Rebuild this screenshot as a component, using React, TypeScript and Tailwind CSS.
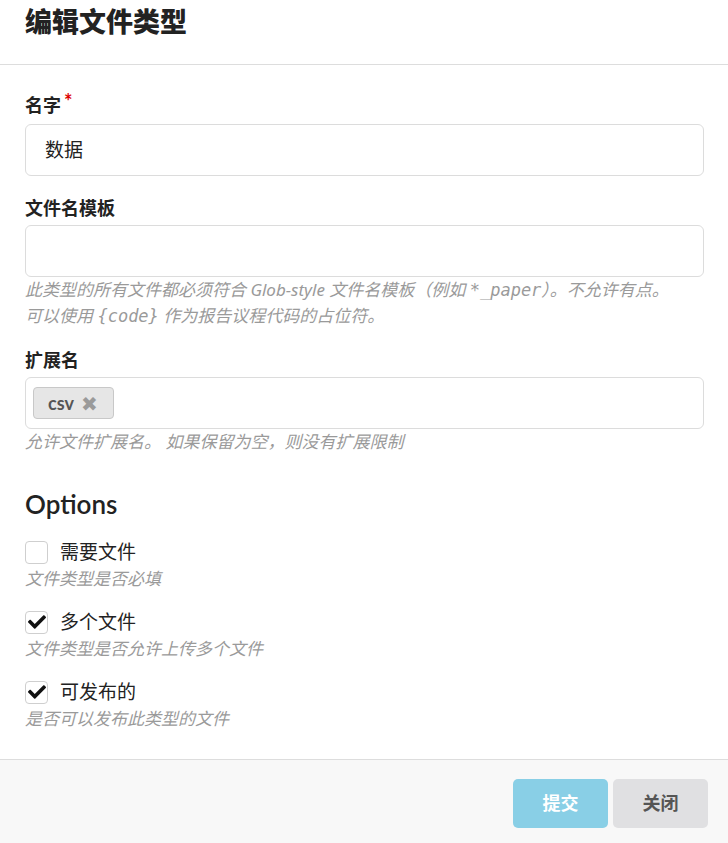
import React from "react";

const font = { fontFamily: "Lato, 'Noto Sans CJK SC', sans-serif" };
const helpFont = { fontFamily: "'Noto Sans', 'Noto Sans CJK SC', sans-serif" };
const mono = { fontFamily: "'DejaVu Sans Mono', 'Noto Sans CJK SC', monospace" };

function Check() {
  return (
    <svg viewBox="0 0 512 512" className="w-[18px] h-[18px]" fill="#111">
      <path d="M173.898 439.404l-166.4-166.4c-9.997-9.997-9.997-26.206 0-36.204l36.203-36.204c9.997-9.998 26.207-9.998 36.204 0L192 312.69 432.095 72.596c9.997-9.997 26.207-9.997 36.204 0l36.203 36.204c9.997 9.997 9.997 26.206 0 36.204l-294.4 294.401c-9.998 9.997-26.207 9.997-36.204-.001z" />
    </svg>
  );
}

function Option({ checked, label, help, first }: { checked: boolean; label: string; help: string; first?: boolean }) {
  return (
    <div className={first ? "mt-[20px]" : "mt-[19px]"}>
      <div className="flex items-center h-[24px]">
        <div className="w-[23px] h-[23px] border border-[#cfcfcf] rounded-[4px] bg-white flex items-center justify-center">
          {checked && <Check />}
        </div>
        <span className="ml-[12px] text-[19px] text-[#222] leading-[24px]">{label}</span>
      </div>
      <div className="mt-[2px] text-[17px] leading-[25px] italic text-[#9a9a9a]" style={helpFont}>{help}</div>
    </div>
  );
}

export default function App() {
  return (
    <div className="w-[728px] h-[843px] bg-white flex flex-col" style={font}>
      <div className="h-[65px] border-b border-[#dddddd] px-[25px] pt-[5px] shrink-0">
        <h1 className="text-[27px] leading-[34px] font-extrabold text-[#222]">编辑文件类型</h1>
      </div>
      <div className="flex-1 pl-[25px] pr-[24px] pt-[28px]">
        <div className="text-[18px] leading-[24px] font-bold text-[#222] flex">
          名字<span className="text-[#d00] text-[20px] leading-[14px] ml-[3px] mt-[1px] font-bold">*</span>
        </div>
        <div className="mt-[7px] h-[52px] border border-[#dcdcdc] rounded-[6px] flex items-center px-[19px] text-[19px] text-[#222]">
          数据
        </div>

        <div className="mt-[20px] text-[18px] leading-[24px] font-bold text-[#222]">文件名模板</div>
        <div className="mt-[5px] h-[52px] border border-[#dcdcdc] rounded-[6px]" />
        <div className="text-[17px] leading-[25px] italic text-[#9a9a9a]" style={helpFont}>
          此类型的所有文件都必须符合 Glob-style 文件名模板（例如 <span style={mono} className="text-[17px]">*_paper</span>）。不允许有点。
          <br />
          可以使用 <span style={mono} className="text-[17px]">{"{code}"}</span> 作为报告议程代码的占位符。
        </div>

        <div className="mt-[19px] text-[18px] leading-[24px] font-bold text-[#222]">扩展名</div>
        <div className="mt-[5px] h-[52px] border border-[#dcdcdc] rounded-[6px] flex items-center px-[7px]">
          <div className="h-[32px] w-[81px] bg-[#e6e6e6] border border-[#c8c8c8] rounded-[4px] flex items-center pl-[14px]">
            <span className="text-[18px] font-bold text-[#555]">csv</span>
            <span className="ml-[7px] text-[20px] leading-[20px] text-[#9a9a9a]">✖</span>
          </div>
        </div>
        <div className="text-[17px] leading-[25px] italic text-[#9a9a9a]" style={helpFont}>允许文件扩展名。 如果保留为空，则没有扩展限制</div>

        <div className="mt-[34px] text-[26px] leading-[32px] font-semibold text-[#222]">Options</div>

        <Option first checked={false} label="需要文件" help="文件类型是否必填" />
        <Option checked={true} label="多个文件" help="文件类型是否允许上传多个文件" />
        <Option checked={true} label="可发布的" help="是否可以发布此类型的文件" />
      </div>
      <div className="h-[84px] border-t border-[#dddddd] bg-[#f8f8f8] flex justify-end items-start pt-[19px] pr-[20px] gap-[5px] shrink-0">
        <button className="w-[95px] h-[49px] rounded-[5px] bg-[#89cfe6] text-white text-[18px] font-bold">提交</button>
        <button className="w-[95px] h-[49px] rounded-[5px] bg-[#e0e0e2] text-[#555] text-[18px] font-bold">关闭</button>
      </div>
    </div>
  );
}
